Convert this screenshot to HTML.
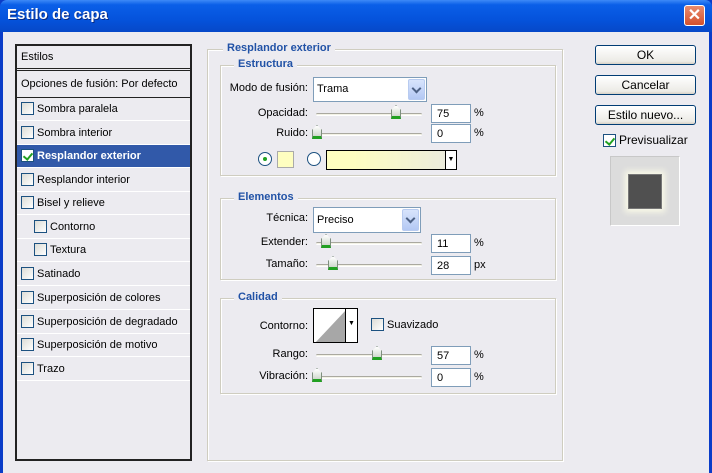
<!DOCTYPE html>
<html><head><meta charset="utf-8"><style>
*{margin:0;padding:0;box-sizing:border-box}
body{width:712px;height:473px;overflow:hidden;background:#0a3cc8;font-family:"Liberation Sans",sans-serif;font-size:11px;color:#000;position:relative}
.a{position:absolute}
#title{left:0;top:0;width:712px;height:32px;background:linear-gradient(#3d8af7 0%,#0a5fe8 15%,#0553dc 60%,#0648c8 100%);border-radius:7px 7px 0 0}
#title span{position:absolute;left:7px;top:6px;color:#fff;font-weight:bold;font-size:15px;text-shadow:1px 1px #0a2a80}
#close{left:684px;top:5px;width:21px;height:21px;background:linear-gradient(#e88b6e,#d4502c);border:1px solid #fff;border-radius:3px;color:#fff;font-size:16px;font-weight:bold;text-align:center;line-height:19px}
#body{left:3px;top:32px;width:706px;height:441px;background:#ecebf0}
#left{left:15px;top:44px;width:177px;height:417px;border:2px solid #222;background:#ecebf0}
.row{position:absolute;left:0;width:173px;height:23px;border-bottom:1px solid #fff;line-height:22px;padding-left:4px}
.cb{display:inline-block;width:13px;height:13px;border:1px solid #1c5180;background:linear-gradient(135deg,#dcdcd6,#fff);vertical-align:-3px;margin-right:3px;position:relative}
.sel{background:#3159a9;color:#fff;font-weight:bold}
.chk::after{content:"";position:absolute;left:3px;top:1px;width:4px;height:7px;border:solid #21a121;border-width:0 2px 2px 0;transform:rotate(40deg)}
.grp{position:absolute;border:1px solid #cfcdc0;box-shadow:inset 1px 1px #fff,1px 1px #fff}
.gt{position:absolute;background:#ecebf0;color:#2152a6;font-weight:bold;padding:0 4px;font-size:11px}
.lbl{position:absolute;text-align:right}
.sel2{position:absolute;background:#fff;border:1px solid #7f9db9;padding-left:3px}
.sel2 i{position:absolute;right:1px;top:1px;bottom:1px;width:17px;background:linear-gradient(#d8e4fc,#b3c8f4);border:1px solid #b8cbf0;border-radius:2px}
.sel2 i::after{content:"";position:absolute;left:4px;top:5px;width:5px;height:5px;border:solid #4d6185;border-width:0 2px 2px 0;transform:rotate(45deg)}
.trk{position:absolute;height:3px;border-top:1px solid #aaa9a0;background:#f3f2e6;border-bottom:1px solid #fff;border-radius:2px}
.th{position:absolute;width:10px;height:14px;background:linear-gradient(#fff,#cfd8cc);border:1px solid #7e8f7e;border-bottom:3px solid #21a121;clip-path:polygon(50% 0,100% 35%,100% 100%,0 100%,0 35%)}
.in{position:absolute;width:40px;height:19px;background:#fff;border:1px solid #7f9db9;padding:3px 0 0 5px}
.pc{position:absolute;left:474px}
.btn{position:absolute;left:595px;width:101px;height:20px;border:1px solid #003c74;border-radius:3px;background:linear-gradient(#fff,#ecebe6 85%,#d6d0c5);text-align:center;line-height:18px;font-size:12px}
</style></head><body>
<div id="title" class="a"><span>Estilo de capa</span></div>
<div id="close" class="a">✕</div>
<div id="body" class="a"></div>

<div id="left" class="a">
<div class="row" style="top:0;height:25px;border-bottom:3px double #222">Estilos</div>
<div class="row" style="top:27px;height:25px;border-bottom:1px solid #222">Opciones de fusión: Por defecto</div>
<div class="row" style="top:52px"><span class="cb"></span>Sombra paralela</div>
<div class="row" style="top:76px"><span class="cb"></span>Sombra interior</div>
<div class="row sel" style="top:99px"><span class="cb chk" style="background:#fff"></span>Resplandor exterior</div>
<div class="row" style="top:123px"><span class="cb"></span>Resplandor interior</div>
<div class="row" style="top:146px"><span class="cb"></span>Bisel y relieve</div>
<div class="row" style="top:170px;padding-left:17px"><span class="cb"></span>Contorno</div>
<div class="row" style="top:193px;padding-left:17px"><span class="cb"></span>Textura</div>
<div class="row" style="top:217px"><span class="cb"></span>Satinado</div>
<div class="row" style="top:241px"><span class="cb"></span>Superposición de colores</div>
<div class="row" style="top:265px"><span class="cb"></span>Superposición de degradado</div>
<div class="row" style="top:288px"><span class="cb"></span>Superposición de motivo</div>
<div class="row" style="top:312px"><span class="cb"></span>Trazo</div>
</div>

<div class="grp" style="left:207px;top:49px;width:356px;height:412px"></div>
<div class="gt" style="left:223px;top:42px">Resplandor exterior</div>

<div class="grp" style="left:220px;top:65px;width:336px;height:111px"></div>
<div class="gt" style="left:234px;top:58px">Estructura</div>
<div class="lbl" style="left:220px;width:88px;top:82px">Modo de fusión:</div>
<div class="sel2" style="left:313px;top:77px;width:114px;height:25px;line-height:23px">Trama<i></i></div>
<div class="lbl" style="left:220px;width:88px;top:107px">Opacidad:</div>
<div class="trk" style="left:316px;top:113px;width:106px"></div><div class="th" style="left:391px;top:105px"></div>
<div class="in" style="left:431px;top:104px">75</div><div class="pc" style="top:107px">%</div>
<div class="lbl" style="left:220px;width:88px;top:127px">Ruido:</div>
<div class="trk" style="left:316px;top:133px;width:106px"></div><div class="th" style="left:312px;top:125px"></div>
<div class="in" style="left:431px;top:124px">0</div><div class="pc" style="top:127px">%</div>
<div class="a" style="left:258px;top:152px;width:14px;height:14px;border:1px solid #1c5180;border-radius:50%;background:#fff"><div class="a" style="left:4px;top:4px;width:4px;height:4px;border-radius:50%;background:#21a121"></div></div>
<div class="a" style="left:277px;top:151px;width:17px;height:17px;background:#fefec0;border:1px solid #aaa"></div>
<div class="a" style="left:307px;top:152px;width:14px;height:14px;border:1px solid #1c5180;border-radius:50%;background:#fff"></div>
<div class="a" style="left:326px;top:150px;width:131px;height:20px;border:1px solid #000;background:linear-gradient(90deg,#fefec0 20%,#eaeae0 100%)"><div class="a" style="right:0;top:0;width:11px;height:18px;border-left:1px solid #000;background:#fff;font-size:7px;text-align:center;line-height:18px">▼</div></div>

<div class="grp" style="left:220px;top:198px;width:336px;height:82px"></div>
<div class="gt" style="left:234px;top:191px">Elementos</div>
<div class="lbl" style="left:220px;width:88px;top:212px">Técnica:</div>
<div class="sel2" style="left:313px;top:207px;width:108px;height:26px;line-height:24px">Preciso<i></i></div>
<div class="lbl" style="left:220px;width:88px;top:236px">Extender:</div>
<div class="trk" style="left:316px;top:242px;width:106px"></div><div class="th" style="left:321px;top:234px"></div>
<div class="in" style="left:431px;top:234px">11</div><div class="pc" style="top:237px">%</div>
<div class="lbl" style="left:220px;width:88px;top:258px">Tamaño:</div>
<div class="trk" style="left:316px;top:264px;width:106px"></div><div class="th" style="left:328px;top:256px"></div>
<div class="in" style="left:431px;top:256px">28</div><div class="pc" style="top:259px">px</div>

<div class="grp" style="left:220px;top:298px;width:336px;height:96px"></div>
<div class="gt" style="left:234px;top:291px">Calidad</div>
<div class="lbl" style="left:220px;width:88px;top:320px">Contorno:</div>
<div class="a" style="left:313px;top:308px;width:45px;height:35px;border:1px solid #000;background:#fff;overflow:hidden">
<svg width="31" height="33" style="position:absolute;left:1px;top:1px"><polygon points="0,33 31,0 31,33" fill="#a7a7a7"/></svg>
<div class="a" style="right:0;top:0;width:12px;height:33px;border-left:1px solid #000;font-size:7px;text-align:center;line-height:30px">▼</div></div>
<div class="a" style="left:371px;top:318px"><span class="cb"></span>Suavizado</div>
<div class="lbl" style="left:220px;width:88px;top:348px">Rango:</div>
<div class="trk" style="left:316px;top:354px;width:106px"></div><div class="th" style="left:372px;top:346px"></div>
<div class="in" style="left:431px;top:346px">57</div><div class="pc" style="top:349px">%</div>
<div class="lbl" style="left:220px;width:88px;top:370px">Vibración:</div>
<div class="trk" style="left:316px;top:376px;width:106px"></div><div class="th" style="left:312px;top:368px"></div>
<div class="in" style="left:431px;top:368px">0</div><div class="pc" style="top:371px">%</div>

<div class="btn" style="top:45px">OK</div>
<div class="btn" style="top:75px">Cancelar</div>
<div class="btn" style="top:105px">Estilo nuevo...</div>
<div class="a" style="left:603px;top:133px;font-size:12px"><span class="cb chk" style="background:#fff"></span>Previsualizar</div>
<div class="a" style="left:610px;top:156px;width:70px;height:70px;background:#dcdcdc;border:1px solid #fff;border-top-color:#c8c8c8;border-left-color:#c8c8c8"></div>
<div class="a" style="left:628px;top:174px;width:34px;height:35px;background:#505050;border:1px solid #777;box-shadow:0 0 6px 3px #fbfbe8"></div>
</body></html>
